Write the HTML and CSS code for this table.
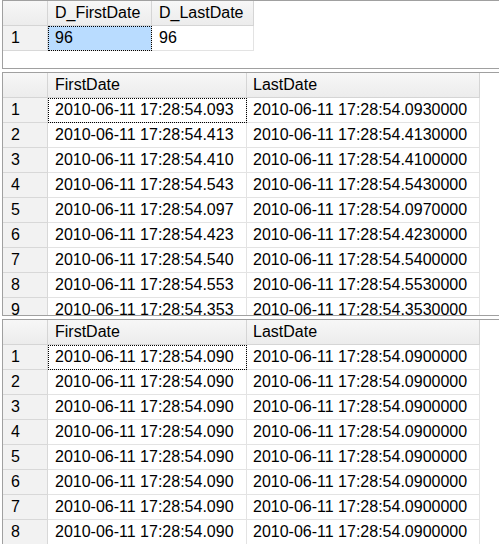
FILE: index.html
```html
<!DOCTYPE html>
<html>
<head>
<meta charset="utf-8">
<link rel="stylesheet" href="styles.css">
</head>
<body>
<div class="panel p1">
  <div class="row head">
    <div class="cell num"></div>
    <div class="cell c1a">D_FirstDate</div>
    <div class="cell c1b">D_LastDate</div>
  </div>
  <div class="row">
    <div class="cell num">1</div>
    <div class="cell c1a sel">96</div>
    <div class="cell c1b">96</div>
  </div>
</div>
<div class="panel p2">
  <div class="row head">
    <div class="cell num"></div>
    <div class="cell c2a">FirstDate</div>
    <div class="cell c2b">LastDate</div>
  </div>
  <div class="row"><div class="cell num">1</div><div class="cell c2a focus">2010-06-11 17:28:54.093</div><div class="cell c2b">2010-06-11 17:28:54.0930000</div></div>
  <div class="row"><div class="cell num">2</div><div class="cell c2a">2010-06-11 17:28:54.413</div><div class="cell c2b">2010-06-11 17:28:54.4130000</div></div>
  <div class="row"><div class="cell num">3</div><div class="cell c2a">2010-06-11 17:28:54.410</div><div class="cell c2b">2010-06-11 17:28:54.4100000</div></div>
  <div class="row"><div class="cell num">4</div><div class="cell c2a">2010-06-11 17:28:54.543</div><div class="cell c2b">2010-06-11 17:28:54.5430000</div></div>
  <div class="row"><div class="cell num">5</div><div class="cell c2a">2010-06-11 17:28:54.097</div><div class="cell c2b">2010-06-11 17:28:54.0970000</div></div>
  <div class="row"><div class="cell num">6</div><div class="cell c2a">2010-06-11 17:28:54.423</div><div class="cell c2b">2010-06-11 17:28:54.4230000</div></div>
  <div class="row"><div class="cell num">7</div><div class="cell c2a">2010-06-11 17:28:54.540</div><div class="cell c2b">2010-06-11 17:28:54.5400000</div></div>
  <div class="row"><div class="cell num">8</div><div class="cell c2a">2010-06-11 17:28:54.553</div><div class="cell c2b">2010-06-11 17:28:54.5530000</div></div>
  <div class="row"><div class="cell num">9</div><div class="cell c2a">2010-06-11 17:28:54.353</div><div class="cell c2b">2010-06-11 17:28:54.3530000</div></div>
</div>
<div class="panel p3">
  <div class="row head">
    <div class="cell num"></div>
    <div class="cell c2a">FirstDate</div>
    <div class="cell c2b">LastDate</div>
  </div>
  <div class="row"><div class="cell num">1</div><div class="cell c2a focus">2010-06-11 17:28:54.090</div><div class="cell c2b">2010-06-11 17:28:54.0900000</div></div>
  <div class="row"><div class="cell num">2</div><div class="cell c2a">2010-06-11 17:28:54.090</div><div class="cell c2b">2010-06-11 17:28:54.0900000</div></div>
  <div class="row"><div class="cell num">3</div><div class="cell c2a">2010-06-11 17:28:54.090</div><div class="cell c2b">2010-06-11 17:28:54.0900000</div></div>
  <div class="row"><div class="cell num">4</div><div class="cell c2a">2010-06-11 17:28:54.090</div><div class="cell c2b">2010-06-11 17:28:54.0900000</div></div>
  <div class="row"><div class="cell num">5</div><div class="cell c2a">2010-06-11 17:28:54.090</div><div class="cell c2b">2010-06-11 17:28:54.0900000</div></div>
  <div class="row"><div class="cell num">6</div><div class="cell c2a">2010-06-11 17:28:54.090</div><div class="cell c2b">2010-06-11 17:28:54.0900000</div></div>
  <div class="row"><div class="cell num">7</div><div class="cell c2a">2010-06-11 17:28:54.090</div><div class="cell c2b">2010-06-11 17:28:54.0900000</div></div>
  <div class="row"><div class="cell num">8</div><div class="cell c2a">2010-06-11 17:28:54.090</div><div class="cell c2b">2010-06-11 17:28:54.0900000</div></div>
</div>
</body>
</html>
```
FILE: styles.css
```css
html, body {
  margin: 0;
  padding: 0;
  background: #ffffff;
}
body {
  font-family: "Liberation Sans", Arial, sans-serif;
  font-size: 16px;
  color: #000;
  overflow: hidden;
}
.panel {
  margin-left: 2px;
  border-top: 1px solid #a0a0a0;
  border-left: 1px solid #a0a0a0;
  border-bottom: 1px solid #a0a0a0;
  overflow: hidden;
  background: #fff;
}
.p1 { height: 67px; }
.p2 { height: 242px; margin-top: 3px; }
.p3 { height: 224px; margin-top: 3px; border-bottom: none; }
.row {
  display: flex;
  height: 25px;
}
.cell {
  box-sizing: border-box;
  height: 25px;
  line-height: 24px;
  border-right: 1px solid #e3e3e3;
  border-bottom: 1px solid #e3e3e3;
  padding-left: 7px;
  white-space: nowrap;
  overflow: hidden;
  flex: none;
}
.num {
  width: 45px;
  background: #f2f2f2;
  padding-left: 8px;
  border-right-color: #d8d8d8;
  border-bottom-color: #d8d8d8;
}
.head .cell {
  background: linear-gradient(#f7f7f7, #ececec);
  border-right-color: #d5d5d5;
  border-bottom-color: #d5d5d5;
}
.c1a { width: 104px; }
.c1b { width: 102px; }
.c2a { width: 199px; }
.c2b { width: 233px; padding-left: 6px; }
.sel { background: #b9dcff; }
.focus, .sel {
  outline: 1px dotted #000;
  outline-offset: -1px;
}
```
